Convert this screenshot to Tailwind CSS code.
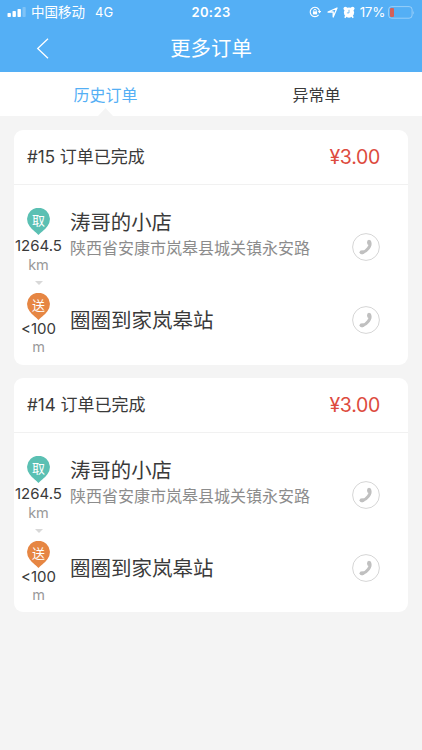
<!DOCTYPE html>
<html lang="zh-CN">
<head>
  <meta charset="UTF-8" />
  <meta name="viewport" content="width=device-width, initial-scale=1.0" />
  <title>更多订单</title>
  <script src="https://cdn.jsdelivr.net/npm/@tailwindcss/browser@4"></script>
</head>
<body class="bg-[#f4f4f4] text-[#3a3a3a] font-['Inter','Noto_Sans_CJK_SC',sans-serif] h-[750px] overflow-hidden">
  <header class="bg-[#54aff5] text-white h-[72px]">
    <!-- Status bar -->
    <div class="relative h-6 flex items-center text-[13.5px] leading-6">
      <svg class="ml-[7px] w-[19px] h-[10px]" viewBox="0 0 19 10" fill="#fff">
        <rect x="0.5" y="6" width="3.4" height="4" rx="0.8" />
        <rect x="5.5" y="4" width="3.4" height="6" rx="0.8" />
        <rect x="10.5" y="2" width="3.4" height="8" rx="0.8" />
        <rect x="15.5" y="0" width="3.2" height="10" rx="0.8" opacity="0.25" />
      </svg>
      <span class="ml-[5px]">中国移动</span>
      <span class="ml-[10px] text-[13px]">4G</span>
      <span class="absolute inset-x-0 text-center text-[13px] font-semibold tracking-[0.4px]">20:23</span>
      <div class="ml-auto mr-[7px] flex items-center">
        <svg class="w-3 h-3" viewBox="0 0 12 12" fill="none" stroke="#fff" stroke-width="1.1">
          <path d="M9.6 8.8A4.7 4.7 0 1 1 10.5 5" />
          <path d="M8.8 5h3.4l-1.7 2.4z" fill="#fff" stroke="none" />
          <rect x="3.9" y="5.4" width="4.2" height="3" fill="#fff" stroke="none" />
          <path d="M4.7 5.6V4.7a1.3 1.3 0 0 1 2.6 0v.9" stroke-width="0.9" />
        </svg>
        <svg class="ml-[6px] w-[11px] h-[11px]" viewBox="0 0 11 11" fill="none" stroke="#fff" stroke-width="1.3" stroke-linejoin="round">
          <path d="M10 1L6.2 10V5H1z" />
        </svg>
        <svg class="ml-[5px] w-3 h-[13px]" viewBox="0 0 12 13">
          <circle cx="2.4" cy="2.6" r="1.9" fill="#fff" />
          <circle cx="9.6" cy="2.6" r="1.9" fill="#fff" />
          <circle cx="6" cy="6.6" r="5.1" fill="#fff" />
          <path d="M3 10L1.8 11.8M9 10l1.2 1.8" stroke="#fff" stroke-width="1.6" />
          <path d="M6 3.8v3.1H3.9" fill="none" stroke="#54aff5" stroke-width="0.8" />
        </svg>
        <span class="ml-[5px] text-[13.4px] tracking-[-0.3px]">17%</span>
        <svg class="ml-[3px] w-[27px] h-[13px]" viewBox="0 0 27 13">
          <rect x="0.6" y="0.6" width="23.5" height="11.6" rx="3" fill="none" stroke="#fff" stroke-opacity="0.4" stroke-width="1" />
          <rect x="2" y="2" width="4" height="9" rx="1" fill="#d4605a" />
          <path d="M25.3 4.4q1.3 2 0 4z" fill="#fff" fill-opacity="0.45" />
        </svg>
      </div>
    </div>
    <!-- Title -->
    <div class="h-12 grid grid-cols-[60px_1fr_60px] items-center">
      <svg class="ml-[36px] w-[13px] h-[21px]" viewBox="0 0 13 21" fill="none" stroke="#fff" stroke-width="1.3">
        <path d="M12 0.7L1.7 10.5L12 20.3" />
      </svg>
      <h1 class="pt-[2px] text-center text-[20.4px] leading-6">更多订单</h1>
    </div>
  </header>

  <!-- Tabs -->
  <nav class="relative bg-white h-11 grid grid-cols-2 text-center text-[16px] leading-[47px]">
    <div class="text-[#54aff5]">历史订单</div>
    <div>异常单</div>
    <svg class="absolute left-[98px] bottom-0 w-[15px] h-2" viewBox="0 0 15 8"><path d="M7.5 0L15 8H0z" fill="#f4f4f4" /></svg>
  </nav>

  <main id="orders" class="px-[14px] pt-[14px] flex flex-col gap-[13px]"></main>

  <script>
    const orders = [
      { no: 15, price: "3.00" },
      { no: 14, price: "3.00" }
    ];

    const phone = `
      <svg class="w-7 h-7" viewBox="0 0 28 28">
        <circle cx="14" cy="14" r="13.4" fill="none" stroke="#d6d6d6" stroke-width="1" />
        <path d="M17.8 9C19.2 12.6 15.4 18.4 10 19.8" fill="none" stroke="#c0c0c0" stroke-width="3" stroke-linecap="round" />
        <ellipse cx="17" cy="9.4" rx="2" ry="2.6" fill="#c0c0c0" />
        <ellipse cx="10.1" cy="19.3" rx="2.6" ry="2" fill="#c0c0c0" />
      </svg>`;

    function pin(label, color) {
      return `
        <div class="relative w-[23px] h-[27px]">
          <svg class="w-[23px] h-[27px]" viewBox="0 0 23 27">
            <path d="M11.5 27C9.8 25 5.2 22 2.6 18.3A11.4 11.4 0 1 1 20.4 18.3C17.8 22 13.2 25 11.5 27z" fill="${color}" />
          </svg>
          <span class="absolute inset-x-0 top-0 text-center text-white text-[13px] leading-6">${label}</span>
        </div>`;
    }

    document.getElementById("orders").innerHTML = orders.map(order => `
      <section class="bg-white rounded-[9px] h-[234.5px]">
        <div class="h-[55px] pl-[13px] pr-7 flex items-center justify-between border-b border-[#f1f1f1]">
          <span class="text-[17px] leading-6">#${order.no} 订单已完成</span>
          <span class="text-[19.5px] leading-6 tracking-[-0.3px] text-[#dd4b3e]">¥${order.price}</span>
        </div>
        <div class="flex">
          <div class="w-[49px] pt-[23px] flex flex-col items-center">
            ${pin("取", "#5bc0b3")}
            <span class="text-[15px] leading-[22px]">1264.5</span>
            <span class="text-[14.5px] leading-[15px] text-[#999]">km</span>
            <svg class="mt-[9px] w-2 h-1" viewBox="0 0 8 4"><path d="M0 0h8L4 4z" fill="#d8d8d8" /></svg>
            <div class="h-2"></div>
            ${pin("送", "#e68643")}
            <span class="text-[15px] leading-[18px]">&lt;100</span>
            <span class="text-[14.5px] leading-[18px] text-[#999]">m</span>
          </div>
          <div class="flex-1 pl-[7px] pt-[25px]">
            <div class="text-[20.4px] leading-[26px]">涛哥的小店</div>
            <div class="text-[16px] leading-6 text-[#8c8c8c] whitespace-nowrap">陕西省安康市岚皋县城关镇永安路</div>
            <div class="mt-12 text-[20.5px] leading-[26px]">圈圈到家岚皋站</div>
          </div>
          <div class="mr-[28px] pt-12 flex flex-col gap-[45px]">
            ${phone}
            ${phone}
          </div>
        </div>
      </section>
    `).join("");
  </script>
</body>
</html>
